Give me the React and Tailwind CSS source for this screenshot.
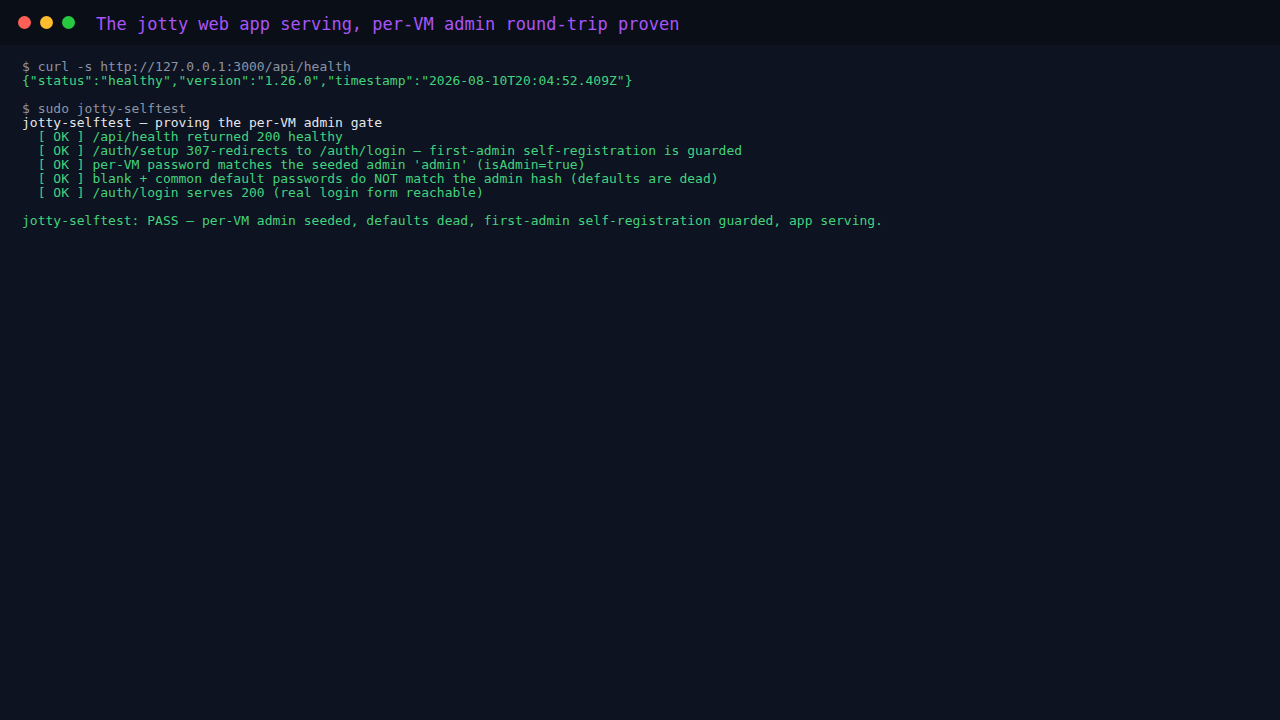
export default function App() {
  const checks = [
    '/api/health returned 200 healthy',
    '/auth/setup 307-redirects to /auth/login — first-admin self-registration is guarded',
    "per-VM password matches the seeded admin 'admin' (isAdmin=true)",
    'blank + common default passwords do NOT match the admin hash (defaults are dead)',
    '/auth/login serves 200 (real login form reachable)',
  ];

  return (
    <div
      className="min-h-screen bg-[#0d1320] font-['DejaVu_Sans_Mono',monospace]"
    >
      <div className="flex h-[45px] items-center bg-[#0a0e17] pl-[18px]">
        <div className="flex gap-[9px]">
          <span className="h-[13px] w-[13px] rounded-full bg-[#ff5f57]" />
          <span className="h-[13px] w-[13px] rounded-full bg-[#febc2e]" />
          <span className="h-[13px] w-[13px] rounded-full bg-[#28c840]" />
        </div>
        <h1 className="ml-[21px] pt-[3px] text-[17px] leading-none text-[#a855f7]">
          The jotty web app serving, per-VM admin round-trip proven
        </h1>
      </div>

      <div className="whitespace-pre px-[22px] pt-[15px] text-[13px] leading-[14px]">
        <div className="text-[#8b93a7]">$ curl -s http://127.0.0.1:3000/api/health</div>
        <div className="text-[#44d27f]">
          {'{"status":"healthy","version":"1.26.0","timestamp":"2026-08-10T20:04:52.409Z"}'}
        </div>
        <div>&nbsp;</div>
        <div className="text-[#8b93a7]">$ sudo jotty-selftest</div>
        <div className="text-[#e5e7eb]">jotty-selftest — proving the per-VM admin gate</div>
        {checks.map((c) => (
          <div key={c} className="text-[#44d27f]">
            {'  [ OK ] ' + c}
          </div>
        ))}
        <div>&nbsp;</div>
        <div className="text-[#44d27f]">
          jotty-selftest: PASS — per-VM admin seeded, defaults dead, first-admin self-registration guarded, app serving.
        </div>
      </div>
    </div>
  );
}
